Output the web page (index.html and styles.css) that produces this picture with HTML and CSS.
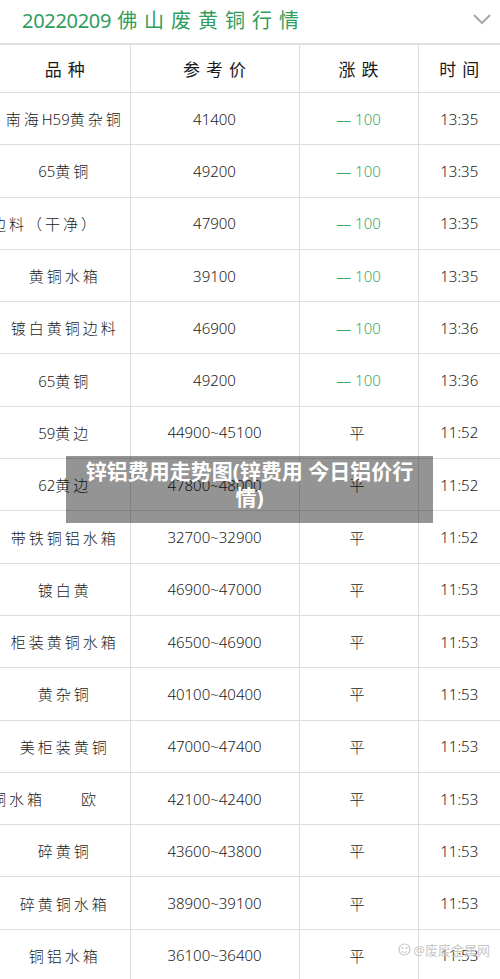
FILE: index.html
```html
<!DOCTYPE html>
<html lang="zh-CN">

<head>
    <meta charset="UTF-8">
    <meta name="viewport" content="width=device-width, initial-scale=1.0">
    <title>20220209佛山废黄铜行情</title>
    <link rel="stylesheet" href="styles.css">
</head>

<body>
    <div class="page">
        <header class="title-bar">
            <h1 class="title"><span class="date">20220209</span><span class="name">佛山废黄铜行情</span></h1>
            <svg class="chevron" width="20" height="12" viewBox="0 0 20 12">
                <path d="M2 2 L10 10 L18 2" fill="none" stroke="#a8a8a8" stroke-width="2" />
            </svg>
        </header>

        <table class="quotes">
            <colgroup>
                <col class="c-name">
                <col class="c-price">
                <col class="c-change">
                <col class="c-time">
            </colgroup>
            <thead>
                <tr>
                    <th>品种</th>
                    <th>参考价</th>
                    <th>涨跌</th>
                    <th>时间</th>
                </tr>
            </thead>
            <tbody>
                <tr><td>南海<span class="n">H59</span>黄杂铜</td><td class="num">41400</td><td class="down">— 100</td><td class="num">13:35</td></tr>
                <tr><td><span class="n">65</span>黄铜</td><td class="num">49200</td><td class="down">— 100</td><td class="num">13:35</td></tr>
                <tr><td class="cut">边料（干净）</td><td class="num">47900</td><td class="down">— 100</td><td class="num">13:35</td></tr>
                <tr><td>黄铜水箱</td><td class="num">39100</td><td class="down">— 100</td><td class="num">13:35</td></tr>
                <tr><td>镀白黄铜边料</td><td class="num">46900</td><td class="down">— 100</td><td class="num">13:36</td></tr>
                <tr><td><span class="n">65</span>黄铜</td><td class="num">49200</td><td class="down">— 100</td><td class="num">13:36</td></tr>
                <tr><td><span class="n">59</span>黄边</td><td class="num">44900~45100</td><td>平</td><td class="num">11:52</td></tr>
                <tr><td><span class="n">62</span>黄边</td><td class="num">47800~48000</td><td>平</td><td class="num">11:52</td></tr>
                <tr><td>带铁铜铝水箱</td><td class="num">32700~32900</td><td>平</td><td class="num">11:52</td></tr>
                <tr><td>镀白黄</td><td class="num">46900~47000</td><td>平</td><td class="num">11:53</td></tr>
                <tr><td>柜装黄铜水箱</td><td class="num">46500~46900</td><td>平</td><td class="num">11:53</td></tr>
                <tr><td>黄杂铜</td><td class="num">40100~40400</td><td>平</td><td class="num">11:53</td></tr>
                <tr><td>美柜装黄铜</td><td class="num">47000~47400</td><td>平</td><td class="num">11:53</td></tr>
                <tr><td class="cut">铜水箱　　欧</td><td class="num">42100~42400</td><td>平</td><td class="num">11:53</td></tr>
                <tr><td>碎黄铜</td><td class="num">43600~43800</td><td>平</td><td class="num">11:53</td></tr>
                <tr><td>碎黄铜水箱</td><td class="num">38900~39100</td><td>平</td><td class="num">11:53</td></tr>
                <tr><td>铜铝水箱</td><td class="num">36100~36400</td><td>平</td><td class="num">11:53</td></tr>
            </tbody>
        </table>

        <!-- caption laid over the picture -->
        <div class="caption">锌铝费用走势图(锌费用 今日铝价行情)</div>

        <div class="watermark">
            <svg width="13" height="13" viewBox="0 0 13 13">
                <circle cx="6.5" cy="6.5" r="5.5" fill="none" stroke="#c8c8c8" stroke-width="1.2" />
                <circle cx="4.5" cy="5" r="1" fill="#c8c8c8" />
                <circle cx="8.5" cy="5" r="1" fill="#c8c8c8" />
                <path d="M4 8.5 Q6.5 10.5 9 8.5" fill="none" stroke="#c8c8c8" stroke-width="1" />
            </svg>
            <span>@废废金属网</span>
        </div>
    </div>
</body>

</html>
```

FILE: styles.css
```css
body,
html {
    margin: 0;
}

body {
    background-color: white;
    overflow: hidden;
}

* {
    font-family: 'Noto Sans', 'Noto Sans CJK SC', sans-serif;
}

.page {
    position: relative;
    width: 500px;
    height: 979px;
    overflow: hidden;
}

.title-bar {
    height: 43px;
    display: flex;
    align-items: center;
    justify-content: space-between;
    padding: 0 8px 0 22px;
    border-bottom: 1px solid #e2e2e2;
}

.title {
    margin: 0;
    font-size: 20px;
    font-weight: 400;
    color: #2f9d5d;
    line-height: 1;
    margin-top: -2px;
}

.title .date {
    letter-spacing: -0.3px;
}

.title .name {
    margin-left: 6px;
    letter-spacing: 7px;
}

.chevron {
    margin-top: -6px;
}

.quotes {
    width: 500px;
    table-layout: fixed;
    border-collapse: collapse;
}

.c-name {
    width: 130px;
}

.c-price {
    width: 169px;
}

.c-change {
    width: 119px;
}

.c-time {
    width: 82px;
}

.quotes th,
.quotes td {
    border: 1px solid #dedede;
    text-align: center;
    color: #1a1a1a;
    font-weight: 300;
    padding: 0;
    white-space: nowrap;
    overflow: hidden;
}

.quotes tr > :first-child {
    border-left: 0;
}

.quotes tr > :last-child {
    border-right: 0;
}

.quotes th {
    height: 47px;
    font-size: 17px;
    font-weight: 400;
    letter-spacing: 6px;
    text-indent: 6px;
}

.quotes td {
    height: 51.3px;
    font-size: 15px;
    letter-spacing: 3px;
}

.quotes td .n {
    letter-spacing: 0;
}

.quotes td.cut {
    text-align: left;
    text-indent: -9px;
}

.quotes td.num {
    letter-spacing: 0;
    font-size: 15px;
}

.quotes td.down {
    color: #3aa862;
    letter-spacing: 0;
    font-size: 15px;
}

.caption {
    position: absolute;
    left: 66px;
    top: 456px;
    width: 367px;
    height: 67px;
    box-sizing: border-box;
    padding: 2px 15px 0;
    background: rgba(0, 0, 0, 0.42);
    color: white;
    font-size: 21px;
    font-weight: 700;
    line-height: 26px;
    text-align: center;
}

.watermark {
    position: absolute;
    right: 10px;
    bottom: 20px;
    display: flex;
    align-items: center;
    gap: 2px;
    font-size: 13px;
    color: #c8c8c8;
}
```
